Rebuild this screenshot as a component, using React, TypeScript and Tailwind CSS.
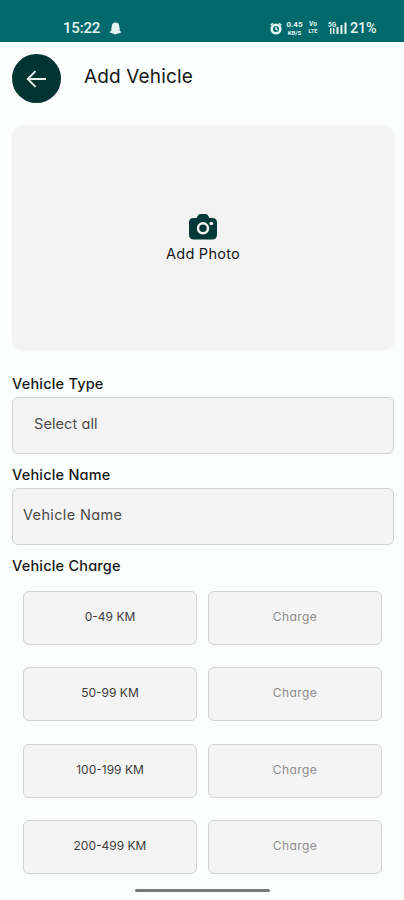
import React from "react";

const charges = ["0-49 KM", "50-99 KM", "100-199 KM", "200-499 KM"];

const StatusBar = () => (
  <div className="h-[42px] shrink-0 bg-[#00696b] text-[#e6f5f4] flex items-center pt-[14px] pl-[63px] pr-[26px] font-['Roboto',sans-serif]">
    <span className="text-[15px] leading-none font-medium tracking-[-0.2px] w-[38px] whitespace-nowrap">15:22</span>
    <svg className="ml-2 w-[13px] h-[13px]" viewBox="0 0 24 24" fill="currentColor">
      <path d="M12 1C7.500 1 5 4 5 8v3L3.500 12l1.500 2C4 16 3 17.500 1 18.500c.5 1.500 2.500 1.500 4 2 .7 1.500 2.500.6 4 1 1 .6 2 1.500 3 1.500s2-.9 3-1.500c1.500-.4 3.300.5 4-1 1.500-.5 3.500-.5 4-2-2-1-3-2.500-4-4.500l1.500-2L19 11V8c0-4-2.500-7-7-7z" />
    </svg>
    <div className="ml-auto flex items-center">
      <svg className="w-[12px] h-[13px]" viewBox="0 0 12 13">
        <circle cx="6" cy="7" r="4.300" fill="none" stroke="currentColor" strokeWidth="2.600" />
        <path d="M.7 3.200 3 1.200M11.300 3.200 9 1.200M6 4.800V7.200l1.600.9" fill="none" stroke="currentColor" strokeWidth="1.400" />
      </svg>
      <div className="ml-[3px] w-[19px] flex flex-col items-center font-bold">
        <span className="text-[8px] leading-[8px]">0.45</span>
        <span className="text-[6px] leading-[7px]">KB/S</span>
      </div>
      <div className="ml-[4px] w-[10px] flex flex-col items-center text-[6.500px] leading-[7px] font-bold">
        <span>Vo</span>
        <span className="text-[5.500px] leading-[7px]">LTE</span>
      </div>
      <svg className="ml-[10px] w-[19px] h-[14px]" viewBox="0 0 19 14" fill="currentColor">
        <text x="0" y="6" fontSize="6.500" fontWeight="700">5G</text>
        <path d="M2 7h1.500v6H2zM5 7h1.500v6H5zM8.500 6h2v7h-2zM12.500 4h2v9h-2zM16.500 1.500h2V13h-2z" />
      </svg>
      <span className="ml-[3px] mt-[2px] w-[28px] text-[14.500px] leading-none font-medium tracking-[-0.200px] whitespace-nowrap">21%</span>
    </div>
  </div>
);

const Label = ({ children }: { children: React.ReactNode }) => (
  <p className="text-[14.500px] leading-5 tracking-[0.200px] font-medium text-[#161818] whitespace-nowrap">{children}</p>
);

const App = () => {
  return (
    <div className="w-[404px] h-[900px] overflow-hidden bg-[#fbfefd] flex flex-col font-['Inter','Noto_Sans',sans-serif] [font-feature-settings:'cv11']">
      <StatusBar />
      <header className="flex items-center pt-3 pl-3">
        <button className="w-[49px] h-[49px] rounded-full bg-[#003432] flex items-center justify-center">
          <svg className="w-[21px] h-[18px]" viewBox="0 0 21 18" fill="none" stroke="#e5efee" strokeWidth="1.900">
            <path d="M20 9H2M9.500 1.200 1.800 9l7.700 7.800" />
          </svg>
        </button>
        <h1 className="ml-[23px] -mt-[3px] text-[19px] leading-7 tracking-[0.150px] text-[#161818] whitespace-nowrap">Add Vehicle</h1>
      </header>

      <main className="pl-3 pr-[10px] pt-[23px]">
        <button className="w-full h-[224px] rounded-[10px] bg-[#f3f3f3] shadow-[0_0_3px_#f3f4f4] flex flex-col items-center pt-[87px]">
          <svg className="w-[30px] h-[28px]" viewBox="0 0 30 28">
            <path
              d="M5.500 5h3l1.500-2.600Q10.800 1 12.500 1h5q1.700 0 2.500 1.400L21.500 5h3Q29 5 29 9.500v12q0 5-5 5H6q-5 0-5-5v-12Q1 5 5.500 5z"
              fill="#003a38"
            />
            <circle cx="15" cy="15.300" r="5" fill="none" stroke="#f3f3f3" strokeWidth="2.500" />
            <rect x="21.500" y="9" width="3.600" height="3" rx="1.200" fill="#f3f3f3" />
          </svg>
          <span className="mt-[3px] text-[14.500px] leading-5 tracking-[0.250px] text-[#161818] whitespace-nowrap">Add Photo</span>
        </button>

        <div className="mt-6">
          <Label>Vehicle Type</Label>
          <div className="mt-[3px] h-[57px] rounded-md border border-[#cfd3d2] bg-[#f4f4f4] pl-[21px] pt-4 text-[14.500px] leading-5 tracking-[0.100px] text-[#4a4a4a]">
            Select all
          </div>
        </div>
        <div className="mt-[11px]">
          <Label>Vehicle Name</Label>
          <div className="mt-[3px] h-[57px] rounded-md border border-[#cfd3d2] bg-[#f4f4f4] pl-[10px] pt-4 text-[14.500px] leading-5 tracking-[0.350px] text-[#4a4a4a]">
            Vehicle Name
          </div>
        </div>
        <div className="mt-[11px]">
          <Label>Vehicle Charge</Label>
          <div className="mt-[15px] pl-[11px] pr-3 flex flex-col gap-[22.300px]">
            {charges.map((range) => (
              <div key={range} className="grid grid-cols-2 gap-[11px] text-center text-xs leading-4">
                <div className="h-[54px] rounded-md border border-[#cfd3d2] bg-[#f4f4f4] pt-[17px] text-[#3c3c3c]">
                  {range}
                </div>
                <div className="h-[54px] rounded-md border border-[#cfd3d2] bg-[#f4f4f4] pt-[17px] tracking-[0.450px] text-[#8c8c8c]">
                  Charge
                </div>
              </div>
            ))}
          </div>
        </div>
      </main>

      <div className="mt-[15px] ml-[135px] w-[135px] h-[3px] shrink-0 rounded-full bg-[#767b79]" />
    </div>
  );
};

export default App;
